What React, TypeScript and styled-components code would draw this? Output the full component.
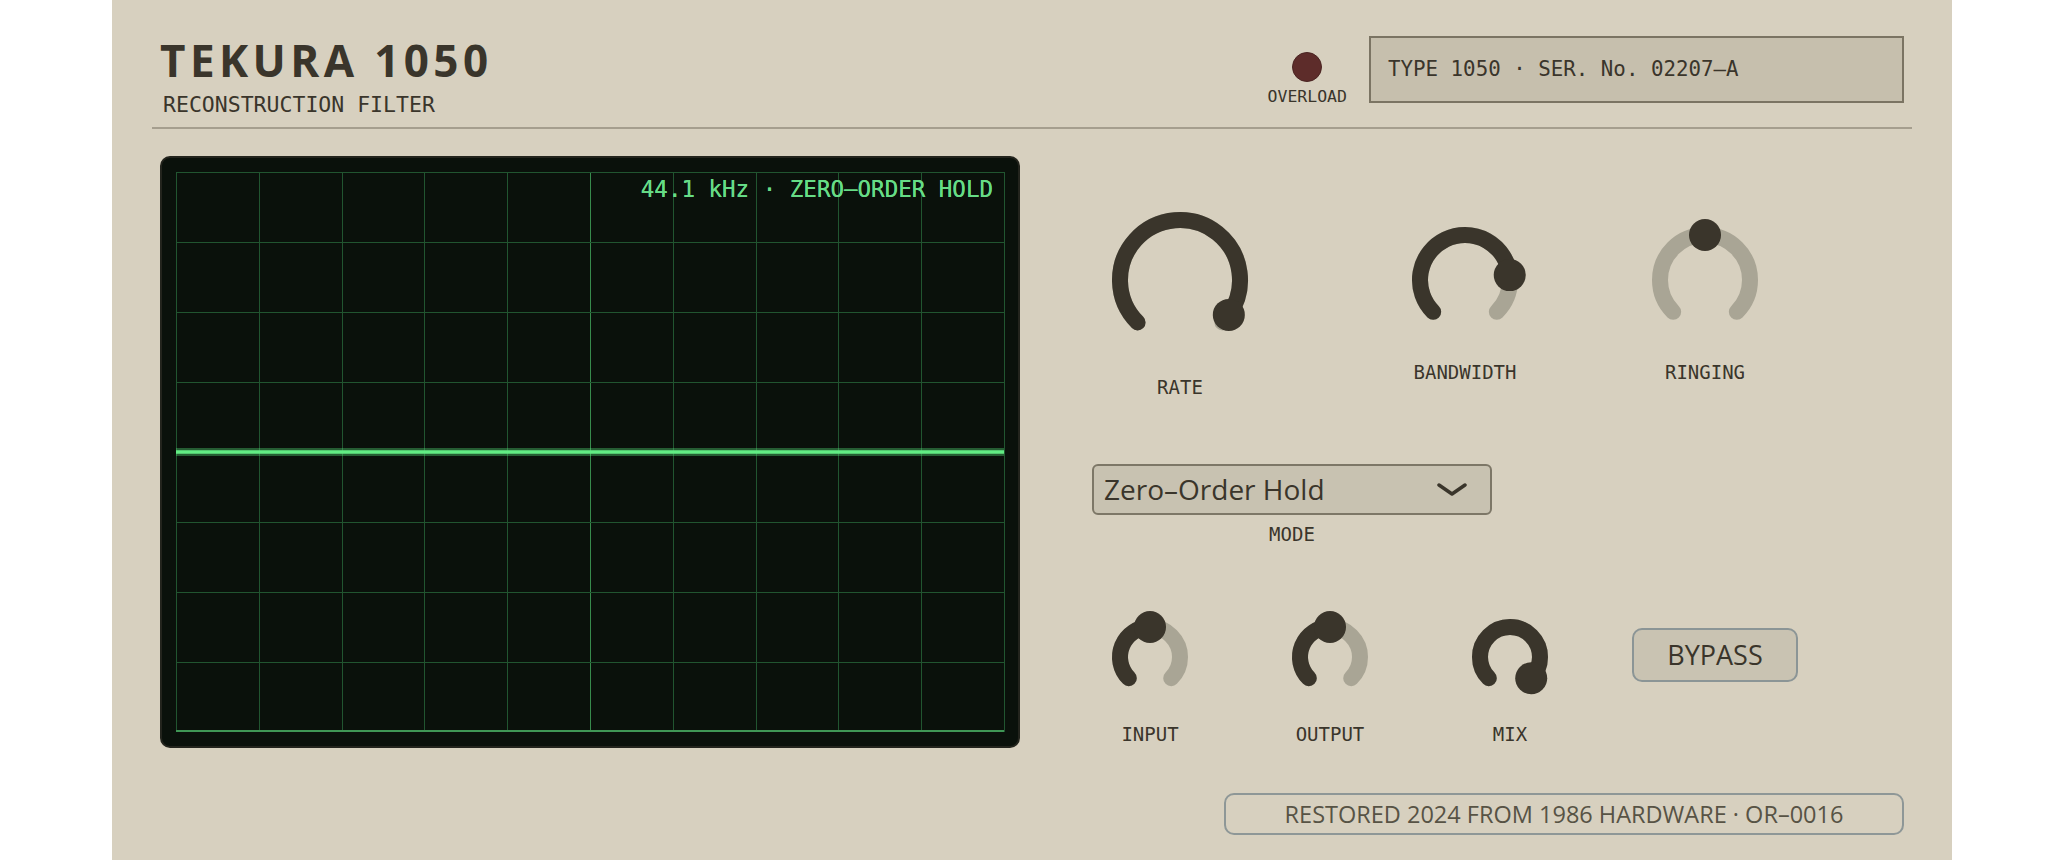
import styled, { createGlobalStyle } from 'styled-components';

const MONO = `'DejaVu Sans Mono', 'Liberation Mono', monospace`;
const SANS = `'Open Sans', 'Noto Sans', sans-serif`;

const colors = {
  panel: '#d7d0bf',
  ink: '#3a352b',
  track: '#a9a595',
  rule: '#a59e8e',
};

const GlobalStyle = createGlobalStyle`
  html, body {
    margin: 0;
    padding: 0;
    background: #ffffff;
  }
  * {
    box-sizing: border-box;
  }
`;

export default function App() {
  return (
    <>
      <GlobalStyle />
      <Panel>
        <Header>
          <div>
            <Title>TEKURA 1050</Title>
            <Subtitle>RECONSTRUCTION FILTER</Subtitle>
          </div>
          <HeaderRight>
            <LedGroup>
              <Led />
              <LedLabel>OVERLOAD</LedLabel>
            </LedGroup>
            <Serial>TYPE 1050 · SER. No. 02207–A</Serial>
          </HeaderRight>
        </Header>

        <Main>
          <ScopeFrame>
            <ScopeGrid />
            <ScopeLabel>44.1 kHz · ZERO–ORDER HOLD</ScopeLabel>
          </ScopeFrame>

          <Controls>
            <TopRow>
              <Knob label='RATE' r={60} value={0.965} $space={12} />
              <Knob label='BANDWIDTH' r={45} value={0.81} $space={148} />
              <Knob label='RINGING' r={45} value={0.5} bipolar $space={118} />
            </TopRow>

            <ModeGroup>
              <Select>
                <span>Zero–Order Hold</span>
                <svg width='30' height='13' viewBox='0 0 30 13'>
                  <path d='M2 2 L15 11 L28 2' fill='none' stroke={colors.ink} strokeWidth='3.5' strokeLinecap='round' strokeLinejoin='round' />
                </svg>
              </Select>
              <ControlLabel>MODE</ControlLabel>
            </ModeGroup>

            <BottomRow>
              <Knob label='INPUT' r={30} value={0.5} $width={116} />
              <Knob label='OUTPUT' r={30} value={0.5} $width={116} />
              <Knob label='MIX' r={30} value={1} $width={116} />
              <Bypass>BYPASS</Bypass>
            </BottomRow>
          </Controls>
        </Main>

        <Footer>
          <FooterNote>RESTORED 2024 FROM 1986 HARDWARE · OR–0016</FooterNote>
        </Footer>
      </Panel>
    </>
  );
}

const THUMB = 16;
const STROKE = 16;
const START = -135;
const END = 135;

function polar(c: number, r: number, deg: number) {
  const a = (deg * Math.PI) / 180;
  return [c + r * Math.sin(a), c - r * Math.cos(a)];
}

function arc(c: number, r: number, from: number, to: number) {
  const [x1, y1] = polar(c, r, from);
  const [x2, y2] = polar(c, r, to);
  const large = to - from > 180 ? 1 : 0;
  return `M ${x1} ${y1} A ${r} ${r} 0 ${large} 1 ${x2} ${y2}`;
}

function Knob({ label, r, value, bipolar, $space = 0, $width }: IKnob) {
  const size = 2 * (r + THUMB);
  const c = size / 2;
  const angle = START + value * (END - START);
  const from = bipolar ? Math.min(0, angle) : START;
  const to = bipolar ? Math.max(0, angle) : angle;
  const [tx, ty] = polar(c, r, angle);

  return (
    <KnobCol $space={$space} $width={$width}>
      <svg width={size} height={size} viewBox={`0 0 ${size} ${size}`}>
        <path d={arc(c, r, START, END)} fill='none' stroke={colors.track} strokeWidth={STROKE} strokeLinecap='round' />
        {to - from > 0.5 && (
          <path d={arc(c, r, from, to)} fill='none' stroke={colors.ink} strokeWidth={STROKE} strokeLinecap='round' />
        )}
        <circle cx={tx} cy={ty} r={THUMB} fill={colors.ink} />
      </svg>
      <ControlLabel>{label}</ControlLabel>
    </KnobCol>
  );
}

interface IKnob {
  label: string;
  r: number;
  value: number;
  bipolar?: boolean;
  $space?: number;
  $width?: number;
}

function ScopeGrid() {
  const W = 828;
  const H = 560;
  const cols = 10;
  const rows = 8;

  return (
    <GridSvg width={W} height={H} viewBox={`0 0 ${W} ${H}`}>
      {Array.from({ length: cols + 1 }, (_, i) => {
        const x = Math.round((i * W) / cols) + 0.5;
        const center = i === cols / 2;
        return (
          <line key={`v${i}`} x1={x} y1={0} x2={x} y2={H} stroke={center ? '#378a4c' : '#215530'} strokeWidth='1' />
        );
      })}
      {Array.from({ length: rows }, (_, j) => {
        const y = j * (H / rows) + 0.5;
        return <line key={`h${j}`} x1={0} y1={y} x2={W} y2={y} stroke='#215530' strokeWidth='1' />;
      })}
      <line x1={0} y1={H - 1} x2={W} y2={H - 1} stroke='#3f9655' strokeWidth='2' />
      <line x1={0} y1={H / 2} x2={W} y2={H / 2} stroke='rgba(90, 235, 125, 0.35)' strokeWidth='8' />
      <line x1={0} y1={H / 2} x2={W} y2={H / 2} stroke='#62ec84' strokeWidth='3.5' />
    </GridSvg>
  );
}

const Panel = styled.main`
  width: 1840px;
  min-height: 100vh;
  margin: 0 auto;
  padding: 36px 48px 40px;
  background: ${colors.panel};
  color: ${colors.ink};
`;

const Header = styled.header`
  display: flex;
  align-items: flex-start;
  justify-content: space-between;
  margin: 0 -8px;
  padding: 0 8px 10px;
  border-bottom: 2px solid ${colors.rule};
`;

const Title = styled.h1`
  margin: 0;
  font-family: ${SANS};
  font-weight: 700;
  font-size: 44px;
  line-height: 48px;
  letter-spacing: 0.1em;
`;

const Subtitle = styled.div`
  margin: 9px 0 0 3px;
  font-family: ${MONO};
  font-size: 21.5px;
  line-height: 24px;
`;

const HeaderRight = styled.div`
  display: flex;
  align-items: flex-start;
  gap: 22px;
`;

const LedGroup = styled.div`
  display: flex;
  flex-direction: column;
  align-items: center;
  gap: 5px;
  margin-top: 16px;
`;

const Led = styled.div`
  width: 30px;
  height: 30px;
  border-radius: 50%;
  background: #5d2c2a;
  border: 1px solid #4a2422;
`;

const LedLabel = styled.div`
  font-family: ${MONO};
  font-size: 16.5px;
  line-height: 19px;
`;

const Serial = styled.div`
  width: 535px;
  padding: 20px 17px;
  border: 2px solid #7b7463;
  background: #c6bfad;
  font-family: ${MONO};
  font-size: 20.8px;
  line-height: 23px;
`;

const Main = styled.section`
  display: flex;
  gap: 72px;
  margin-top: 27px;
`;

const ScopeFrame = styled.div`
  position: relative;
  flex: none;
  width: 860px;
  height: 592px;
  padding: 14px;
  border: 2px solid #23241d;
  border-radius: 10px;
  background: #0a110b;
`;

const GridSvg = styled.svg`
  display: block;
  overflow: visible;
`;

const ScopeLabel = styled.div`
  position: absolute;
  top: 18px;
  right: 25px;
  font-family: ${MONO};
  font-size: 22.5px;
  line-height: 26px;
  color: #66dc86;
  text-shadow: 0 0 0.5px #66dc86;
`;

const Controls = styled.div`
  flex: 1;
  display: flex;
  flex-direction: column;
  align-items: flex-start;
  gap: 66px;
  padding-top: 48px;
`;

const TopRow = styled.div`
  display: flex;
  align-items: center;
`;

const KnobCol = styled.div<{ $space: number; $width?: number }>`
  display: flex;
  flex-direction: column;
  align-items: center;
  gap: 20px;
  margin-left: ${p => p.$space}px;
  width: ${p => (p.$width ? `${p.$width}px` : 'auto')};

  svg {
    display: block;
  }
`;

const ControlLabel = styled.div`
  font-family: ${MONO};
  font-size: 19px;
  line-height: 22px;
`;

const ModeGroup = styled.div`
  display: flex;
  flex-direction: column;
  align-items: center;
  gap: 8px;
  width: 400px;
`;

const Select = styled.div`
  width: 100%;
  height: 51px;
  display: flex;
  align-items: center;
  justify-content: space-between;
  padding: 0 23px 0 10px;
  border: 2px solid #7d7767;
  border-radius: 6px;
  background: #c8c2b1;
  font-family: ${SANS};
  font-size: 28px;
  line-height: 33px;

  svg {
    display: block;
  }
`;

const BottomRow = styled.div`
  display: flex;
  align-items: flex-start;
  gap: 64px;
`;

const Bypass = styled.button`
  width: 166px;
  height: 54px;
  margin-top: 17px;
  padding: 0;
  border: 2px solid #8b9596;
  border-radius: 10px;
  background: #c9c3b2;
  color: ${colors.ink};
  font-family: ${SANS};
  font-size: 27px;
  line-height: 34px;
`;

const Footer = styled.footer`
  display: flex;
  justify-content: flex-end;
  margin-top: 45px;
`;

const FooterNote = styled.div`
  width: 680px;
  padding: 5px 0;
  border: 2px solid #8e9797;
  border-radius: 10px;
  text-align: center;
  font-family: ${SANS};
  font-size: 23.5px;
  line-height: 28px;
  color: #575345;
`;
